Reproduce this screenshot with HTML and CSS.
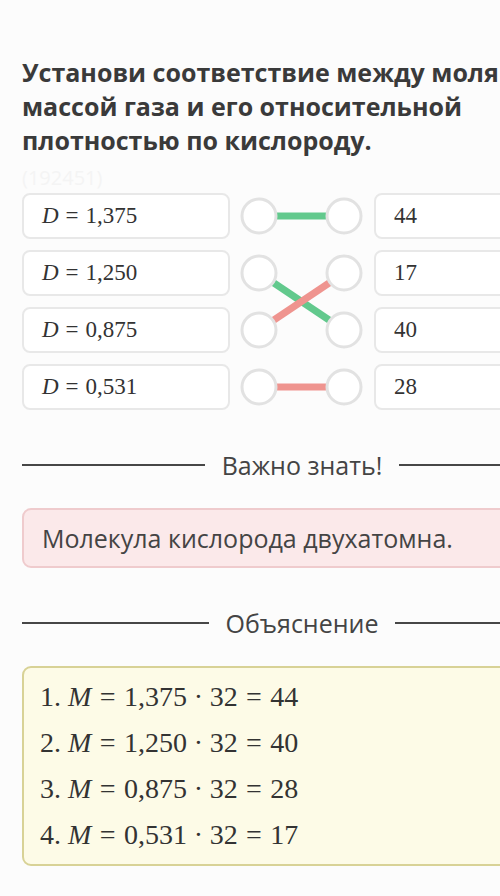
FILE: index.html
```html
<!DOCTYPE html>
<html>
<head>
    <title>Соответствие</title>
    <link rel="stylesheet" href="styles.css">
</head>
<body>
    <div class="page">
        <h2 class="title">Установи соответствие между молярной массой газа и его относительной плотностью по кислороду.</h2>
        <div class="task-id">(192451)</div>

        <div class="match">
            <div class="cell left r1"><span class="mi">D</span><span class="mo">=</span><span class="mn">1,375</span></div>
            <div class="cell left r2"><span class="mi">D</span><span class="mo">=</span><span class="mn">1,250</span></div>
            <div class="cell left r3"><span class="mi">D</span><span class="mo">=</span><span class="mn">0,875</span></div>
            <div class="cell left r4"><span class="mi">D</span><span class="mo">=</span><span class="mn">0,531</span></div>

            <svg class="links" width="144" height="217" viewBox="0 0 144 217">
                <line x1="29" y1="23" x2="114" y2="23" class="ok" />
                <line x1="29" y1="80" x2="114" y2="137" class="ok" />
                <line x1="29" y1="137" x2="114" y2="80" class="bad" />
                <line x1="29" y1="194" x2="114" y2="194" class="bad" />
                <circle cx="29" cy="23" r="17" />
                <circle cx="114" cy="23" r="17" />
                <circle cx="29" cy="80" r="17" />
                <circle cx="114" cy="80" r="17" />
                <circle cx="29" cy="137" r="17" />
                <circle cx="114" cy="137" r="17" />
                <circle cx="29" cy="194" r="17" />
                <circle cx="114" cy="194" r="17" />
            </svg>

            <div class="cell right r1"><span class="mn">44</span></div>
            <div class="cell right r2"><span class="mn">17</span></div>
            <div class="cell right r3"><span class="mn">40</span></div>
            <div class="cell right r4"><span class="mn">28</span></div>
        </div>

        <div class="divider">Важно знать!</div>
        <div class="note">Молекула кислорода двухатомна.</div>

        <div class="divider">Объяснение</div>
        <div class="explain">
            <div class="step"><span class="mn">1.</span> <span class="mi">M</span><span class="mo">=</span><span class="mn">1,375</span><span class="mb">·</span><span class="mn">32</span><span class="mo">=</span><span class="mn">44</span></div>
            <div class="step"><span class="mn">2.</span> <span class="mi">M</span><span class="mo">=</span><span class="mn">1,250</span><span class="mb">·</span><span class="mn">32</span><span class="mo">=</span><span class="mn">40</span></div>
            <div class="step"><span class="mn">3.</span> <span class="mi">M</span><span class="mo">=</span><span class="mn">0,875</span><span class="mb">·</span><span class="mn">32</span><span class="mo">=</span><span class="mn">28</span></div>
            <div class="step"><span class="mn">4.</span> <span class="mi">M</span><span class="mo">=</span><span class="mn">0,531</span><span class="mb">·</span><span class="mn">32</span><span class="mo">=</span><span class="mn">17</span></div>
        </div>
    </div>
</body>
</html>
```

FILE: styles.css
```css
html, body {
    margin: 0;
    padding: 0;
    background-color: #fcfcfc;
    overflow: hidden;
}

body {
    font-family: "Open Sans", Arial, sans-serif;
    color: #3a3a3a;
}

.page {
    width: 560px;
    padding-left: 22px;
    padding-top: 55px;
}

.title {
    margin: 0;
    font-size: 25px;
    line-height: 34px;
    font-weight: 700;
    color: #3a3a3a;
}

.task-id {
    margin-top: 8px;
    font-size: 20px;
    line-height: 26px;
    color: #f4f4f4;
}

/* matching grid */
.match {
    margin-top: 2px;
    display: grid;
    grid-template-columns: 208px 144px 208px;
    grid-template-rows: repeat(4, 46px);
    row-gap: 11px;
}

.cell {
    box-sizing: border-box;
    background: #fff;
    border: 2px solid #e8e8e8;
    border-radius: 8px;
    display: flex;
    align-items: center;
    padding-left: 18px;
    font-family: "Liberation Serif", "Times New Roman", serif;
    font-size: 23px;
    color: #333;
}

.left { grid-column: 1; }
.right { grid-column: 3; }
.r1 { grid-row: 1; }
.r2 { grid-row: 2; }
.r3 { grid-row: 3; }
.r4 { grid-row: 4; }

.links {
    grid-column: 2;
    grid-row: 1 / 5;
}

.links line {
    stroke-width: 7;
}

.links .ok { stroke: #62c98d; }
.links .bad { stroke: #ef948f; }

.links circle {
    fill: #fff;
    stroke: #e2e2e2;
    stroke-width: 3;
}

.mi {
    font-style: italic;
}

.mo {
    margin: 0 0.3em;
}

.mb {
    margin: 0 0.24em;
}

/* sections */
.divider {
    margin-top: 40px;
    display: flex;
    align-items: center;
    gap: 17px;
    font-size: 25px;
    line-height: 30px;
    color: #444;
}

.divider::before,
.divider::after {
    content: "";
    flex: 1;
    height: 2px;
    background: #474747;
}

.note {
    margin-top: 28px;
    box-sizing: border-box;
    height: 60px;
    display: flex;
    align-items: center;
    padding-left: 18px;
    background: #fbe9ea;
    border: 2px solid #efcbcd;
    border-radius: 9px;
    font-size: 25px;
    color: #444;
}

.explain {
    margin-top: 28px;
    padding: 6px 16px;
    background: #fdfbe7;
    border: 2px solid #d8d296;
    border-radius: 9px;
    font-family: "Liberation Serif", "Times New Roman", serif;
    font-size: 28px;
    color: #333;
}

.step {
    line-height: 46px;
}
```
